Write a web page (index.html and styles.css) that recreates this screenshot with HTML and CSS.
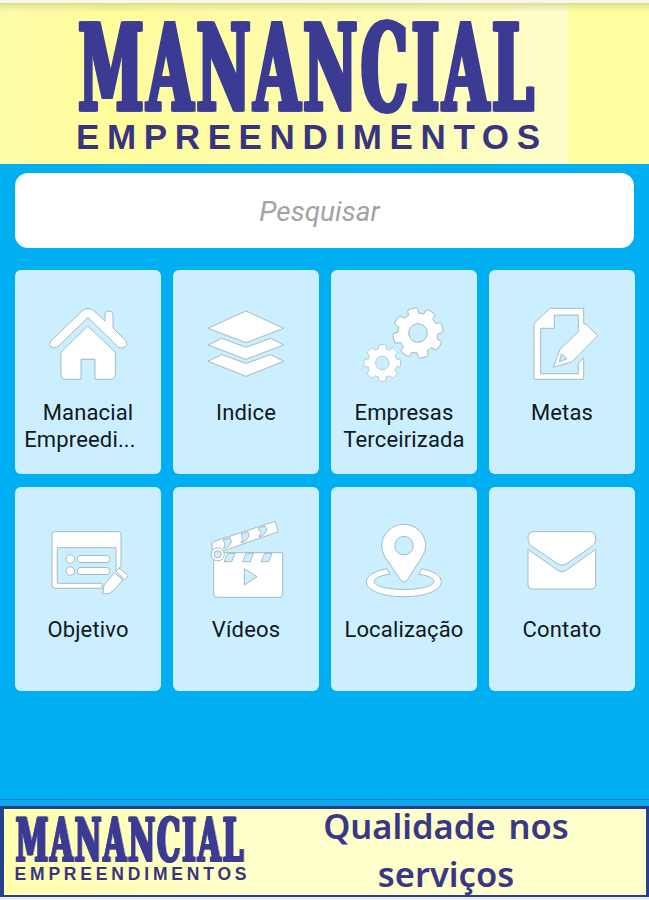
FILE: index.html
```
<!DOCTYPE html>
<html lang="pt-br">
<head>
<meta charset="utf-8">
<title>Manancial Empreendimentos</title>
<link rel="stylesheet" href="styles.css">
</head>

<body>

<div class="header">
	<svg class="logo" viewBox="0 0 466 130">
		<g id="logo">
			<text class="logo-name" x="2" y="90" textLength="459" lengthAdjust="spacingAndGlyphs">MANANCIAL</text>
			<text class="logo-sub" x="-1" y="128.500" textLength="464">EMPREENDIMENTOS</text>
		</g>
	</svg>
</div>

<div class="search">
	<input type="text" placeholder="Pesquisar">
</div>

<ul class="menu">
	<li>
		<svg class="icon" viewBox="0 0 146 120">
			<path d="M36 71L67 41Q73 36 79 41L90 51V44Q90 41 94 41Q98 41 98 44V58L110.500 70.500Q113 75 110 77Q106 79 103 77L73 47.500L43 76.500Q39 79 36 77Q33 75 36 71Z"/>
			<path d="M72.700 56L46 82V104Q46 109.300 51 109.300H66V89.300H80V109.300H95Q100.300 109.300 100.300 104V82Z"/>
		</svg>
		<span>Manacial</span>
		<span class="cut">Empreedi...</span>
	</li>
	<li>
		<svg class="icon" viewBox="0 0 146 120">
			<path d="M73 41L110.700 58.300L73 72.700L35 58.300Z"/>
			<path d="M35 75L48.700 68.300L73 77.300L97.700 68.300L110.700 75L73 89.300Z"/>
			<path d="M35 91.300L48.700 84.500L73 93.500L97.700 84.500L110.700 91.300L73 106.300Z"/>
		</svg>
		<span>Indice</span>
	</li>
	<li>
		<svg class="icon" viewBox="0 0 146 120">
			<defs>
				<path id="gear" fill-rule="evenodd" d="M19.300 -5.200L23 -5.200Q25 -5 25 -3V3Q25 5 23 5.200L19.300 5.200A20 20 0 0 1 17.300 10L20 12.600Q21 14 20 15.500L15.500 20Q14 21 12.600 20L10 17.300A20 20 0 0 1 5.200 19.300L5.200 23Q5 25 3 25H-3Q-5 25 -5.200 23L-5.200 19.300A20 20 0 0 1 -10 17.300L-12.600 20Q-14 21 -15.500 20L-20 15.500Q-21 14 -20 12.600L-17.300 10A20 20 0 0 1 -19.300 5.200L-23 5.200Q-25 5 -25 3V-3Q-25 -5 -23 -5.200L-19.300 -5.200A20 20 0 0 1 -17.300 -10L-20 -12.600Q-21 -14 -20 -15.500L-15.500 -20Q-14 -21 -12.600 -20L-10 -17.300A20 20 0 0 1 -5.200 -19.300L-5.200 -23Q-5 -25 -3 -25H3Q5 -25 5.200 -23L5.200 -19.300A20 20 0 0 1 10 -17.300L12.600 -20Q14 -21 15.500 -20L20 -15.500Q21 -14 20 -12.600L17.300 -10A20 20 0 0 1 19.300 -5.200ZM9.300 0A9.300 9.300 0 1 0 -9.300 0A9.300 9.300 0 1 0 9.300 0Z"/>
			</defs>
			<use href="#gear" transform="translate(87 63) rotate(-13)"/>
			<use href="#gear" transform="translate(51.300 93) scale(.73)"/>
		</svg>
		<span>Empresas</span>
		<span>Terceirizada</span>
	</li>
	<li>
		<svg class="icon" viewBox="0 0 146 120">
			<path d="M61 38.300H94.700V53.300L97.700 55L108.700 65.700L82.700 92L64.300 97.300L71 79.300L89.300 61.700V45H65.300V58.300H51.700V103.700H89.300V93.300L94.700 87.700V109.300H45V53.300Z"/>
			<path class="hole" d="M72.500 84L78 88.700L70.300 91.700Z"/>
		</svg>
		<span>Metas</span>
	</li>
	<li>
		<svg class="icon" viewBox="0 0 146 120">
			<path d="M86.700 101.300H40Q37 101.300 37 98V47Q37 44.700 39 44.700H104Q106 44.700 106 47V79L101 84V60.700H42.300V96.300H87.500Z"/>
			<circle cx="55.300" cy="72" r="4.200"/>
			<circle cx="55.300" cy="84" r="4.200"/>
			<rect x="62.300" y="68.500" width="32.400" height="7" rx="3"/>
			<rect x="62.300" y="80.500" width="32.400" height="7" rx="3"/>
			<path d="M87.700 107L89 98L99.300 85.700L108 93L98.300 103.700L94 106.500Z"/>
			<path d="M101 84L104 81L113.300 88.700L109.500 93Z"/>
		</svg>
		<span>Objetivo</span>
	</li>
	<li>
		<svg class="icon" viewBox="0 0 146 120">
			<path d="M40.700 66V107Q40.700 110.300 44 110.300H107Q109.700 110.300 109.700 107V65.700H52Z"/>
			<path d="M39 63V57Q39 55 41 54.500L102 34.300L105.300 44.700L51 63.700Z"/>
			<circle cx="44.700" cy="67.300" r="6.600"/>
			<circle class="hole" cx="44.700" cy="67.300" r="3.500"/>
			<path class="hole" d="M50 53L57 50.700L58.500 55L54.500 60.500L50.500 61.500L52 57ZM68 47L75 44.700L76 49L72 54.500L68 56L70 51.500ZM85 41.300L92 39L94 43L90 48.500L86 50L88 45.500Z"/>
			<path class="hole" d="M54.700 66.300H62L58.700 74.700H51ZM73.200 66.300H80.500L77.200 74.700H69.500ZM91.700 66.300H99L95.700 74.700H88ZM71.300 81.700L84 89.700L71.300 98Z"/>
		</svg>
		<span>Vídeos</span>
	</li>
	<li>
		<svg class="icon" viewBox="0 0 146 120">
			<path fill-rule="evenodd" d="M73 95Q71 95 69 92L54 70Q50.700 64 50.700 59A22 21.700 0 0 1 94.700 59Q94.700 64 91 70L77 92Q75 95 73 95ZM82.300 58.700A9.300 9.300 0 1 0 63.700 58.700A9.300 9.300 0 1 0 82.300 58.700Z"/>
			<path d="M56 81.500Q35.300 86 35.300 94.500C35.300 104 53 109.700 73 109.700S110.300 104 110.300 94.500Q110.300 86 91 81.500L87.500 87Q103 89.500 103 94.500C103 99 89 102.500 73 102.500S43 99 43 94.500Q43 89.500 59 87Z"/>
		</svg>
		<span>Localização</span>
	</li>
	<li>
		<svg class="icon" viewBox="0 0 146 120">
			<path d="M44.500 44.700H101.500Q106.700 45 106.700 51Q106.700 57 102 60L77 77Q73 79.500 69 77L44 60Q39 57 39 51Q39 45 44.500 44.700Z"/>
			<path d="M39 62.300L69 83.500Q73 86.500 77 83.500L106.700 62.300V98Q106.700 102 103 102H43Q39 102 39 98Z"/>
		</svg>
		<span>Contato</span>
	</li>
</ul>

<div class="footer">
	<div class="banner">
		<svg class="logo-small" viewBox="0 0 466 130"><use href="#logo"/></svg>
		<p>Qualidade nos serviços</p>
	</div>
</div>

</body>
</html>
```

FILE: styles.css
```
* {
	box-sizing: border-box;
}

body {
	margin: 0;
	height: 900px;
	display: flex;
	flex-direction: column;
	overflow: hidden;
	background-color: #00aef2;
	font-family: Roboto, "Liberation Sans", sans-serif;
}

.header {
	height: 164px;
	padding: 17px 0 0 77px;
	border-top: 3px solid #f6f8ea;
	background: linear-gradient(rgba(190, 190, 120, .5), rgba(255, 255, 160, 0) 9px),
		linear-gradient(to right, #fdfcaa, #fffd9c 110px, #fefcae 330px, #fffecb 568px, #ffff9f 569px);
}

.logo {
	display: block;
	width: 466px;
	height: 130px;
	overflow: visible;
}

/* the side shadows make the stems fatter than the serifs */
.logo-name {
	font: bold 119px "DejaVu Serif", serif;
	letter-spacing: 8px;
	fill: #3c3b94;
	stroke: #3c3b94;
	stroke-width: 3px;
	filter: drop-shadow(1.6px 0 0 #3c3b94) drop-shadow(-1.6px 0 0 #3c3b94);
}

.logo-sub {
	font: bold 35px "Liberation Sans", Arial, sans-serif;
	fill: #39347f;
}

.search {
	padding: 9px 15px 0;
}

.search input {
	display: block;
	width: 100%;
	height: 75px;
	border: 0;
	border-radius: 13px;
	padding: 2px 10px 0 0;
	background-color: #fff;
	font: italic 28px Roboto, sans-serif;
	text-align: center;
}

.search input::placeholder {
	color: #a3a3a3;
}

.menu {
	display: grid;
	grid-template-columns: repeat(4, 146px);
	grid-auto-rows: 204px;
	gap: 13px 12px;
	margin: 22px 0 0 15px;
	padding: 0;
	list-style-type: none;
}

.menu li {
	border-radius: 6px;
	background-color: #ccefff;
	color: #10181c;
	font-size: 22px;
	line-height: 27px;
	letter-spacing: .15px;
	text-align: center;
}

.menu span {
	display: block;
}

.menu .cut {
	padding-right: 16px;
}

.icon {
	display: block;
	width: 146px;
	height: 120px;
	margin-bottom: 9px;
	fill: #fff;
	stroke: #9db4b8;
	stroke-width: .9px;
	stroke-linejoin: round;
}

.icon .hole {
	fill: #ccefff;
}

.footer {
	margin-top: auto;
	height: 101px;
	padding: 6px 0 3px;
	border-top: 1px solid #0878bd;
	background: linear-gradient(#12a5e8 97px, #e8edf0 97px);
}

.banner {
	display: flex;
	height: 91px;
	border: 2px solid #24408f;
	border-width: 3px 3px 2px 4px;
	background: linear-gradient(to right, #ffffae, #ffffcc 260px);
}

.logo-small {
	width: 233px;
	height: 65px;
	margin: 7px 0 0 11px;
	overflow: visible;
}

.banner p {
	width: 270px;
	margin: -7px 0 0 63px;
	color: #3a3786;
	font: 600 34.5px/48px "Noto Sans", sans-serif;
	word-spacing: 4px;
	text-align: center;
}
```
